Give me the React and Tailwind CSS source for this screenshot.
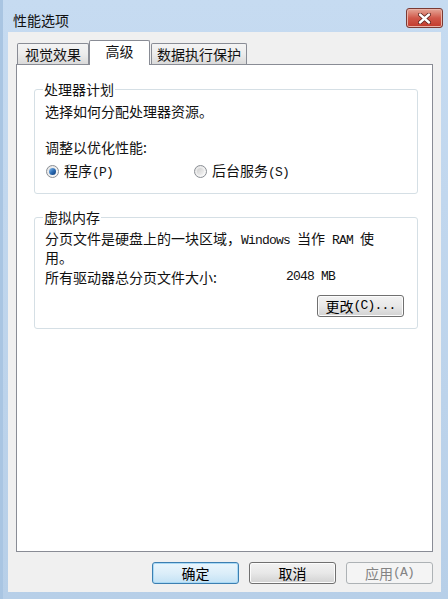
import React from "react";

const cjk = "font-['Noto_Sans_CJK_SC','Noto_Sans',sans-serif]";
const mono = "font-['Liberation_Mono',monospace] text-[13px] tracking-[-0.8px]";

function Radio({ checked }) {
  return (
    <span className="w-[13px] h-[13px] rounded-full border border-[#8a8e94] bg-gradient-to-br from-[#e4e4e4] to-[#fbfbfb] flex items-center justify-center shrink-0">
      {checked ? (
        <span className="w-[7px] h-[7px] rounded-full bg-gradient-to-br from-[#8fc3f0] via-[#2f6fb6] to-[#0d3a78]" />
      ) : (
        <span className="w-[7px] h-[7px] rounded-full bg-gradient-to-br from-[#cfcfcf] to-[#f4f4f4]" />
      )}
    </span>
  );
}

function Tab({ children, selected, className = "" }) {
  if (selected) {
    return (
      <div
        className={
          "h-[25px] -mb-px relative z-10 border border-b-0 border-[#898c95] bg-white rounded-t-[2px] flex items-start justify-center pt-[2px] text-[14px] leading-[16px] " +
          className
        }
      >
        {children}
      </div>
    );
  }
  return (
    <div
      className={
        "h-[21px] border border-b-0 border-[#898c95] bg-gradient-to-b from-[#f4f4f4] via-[#ececec] to-[#dadada] rounded-t-[2px] flex items-center justify-center text-[14px] leading-[16px] " +
        className
      }
    >
      {children}
    </div>
  );
}

function Btn({ children, variant = "normal", className = "" }) {
  const base =
    "h-[22px] w-[87px] rounded-[3px] flex items-center justify-center text-[14px] leading-[16px] ";
  if (variant === "default")
    return (
      <div
        className={
          base +
          "border border-[#3c7fb1] bg-gradient-to-b from-[#eaf6fd] via-[#dceef9] to-[#c3e2f5] shadow-[inset_0_0_0_1px_#a9d9f5] text-black " +
          className
        }
      >
        {children}
      </div>
    );
  if (variant === "disabled")
    return (
      <div
        className={
          base + "border border-[#adb2b5] bg-[#f4f4f4] text-[#838383] " + className
        }
      >
        {children}
      </div>
    );
  return (
    <div
      className={
        base +
        "border border-[#707070] bg-gradient-to-b from-[#f2f2f2] via-[#e8e8e8] to-[#d2d2d2] shadow-[inset_0_0_0_1px_#fcfcfc] text-black " +
        className
      }
    >
      {children}
    </div>
  );
}

export default function App() {
  return (
    <div
      className={
        "w-[448px] h-[599px] flex flex-col bg-gradient-to-b from-[#c6dbf1] to-[#b7cfe8] border-l-[3px] border-l-[#a9c5e2] text-[#111] " +
        cjk
      }
    >
      {/* title bar */}
      <div className="h-[32px] flex items-start pl-[10px] pr-[5px] shrink-0">
        <span className="mt-[12px] text-[14px] leading-[16px] text-[#111]">性能选项</span>
        <div className="ml-auto mt-[8px] w-[37px] h-[20px] rounded-[3px] border border-[#7a3a34] bg-gradient-to-b from-[#e4a698] via-[#d0584a] to-[#c2392c] shadow-[inset_0_0_0_1px_#eab3a8] flex items-center justify-center">
          <svg width="13" height="11" viewBox="0 0 13 11">
            <path
              d="M2 1.5 L11 9.5 M11 1.5 L2 9.5"
              stroke="#5a1f1a"
              strokeWidth="4"
              strokeLinecap="round"
            />
            <path
              d="M2 1.5 L11 9.5 M11 1.5 L2 9.5"
              stroke="#ffffff"
              strokeWidth="2.4"
              strokeLinecap="round"
            />
          </svg>
        </div>
      </div>

      {/* client */}
      <div className="flex-1 ml-[5px] mr-[7px] mb-[7px] bg-[#f0f0f0] flex flex-col px-[8px] pt-[8px] pb-[8px] min-h-0">
        {/* tabs */}
        <div className="h-[24px] flex items-end pl-[1px] shrink-0">
          <Tab className="w-[72px]">视觉效果</Tab>
          <Tab selected className="w-[61px]">高级</Tab>
          <Tab className="w-[96px] ml-[1px]">数据执行保护</Tab>
        </div>

        {/* panel */}
        <div className="flex-1 border border-[#898c95] bg-white pl-[17px] pr-[14px] pt-[16px]">
          <fieldset className="border border-[#d5dfe5] rounded-[3px] pl-[10px] pr-[10px] pt-[6px] pb-[14px] text-[14px] leading-[16px]">
            <legend className="-ml-[2px] px-[1px] leading-[16px]">处理器计划</legend>
            <div>选择如何分配处理器资源。</div>
            <div className="mt-[20px]">调整以优化性能:</div>
            <div className="mt-[8px] h-[16px] flex items-center">
              <div className="w-[149px] flex items-center pl-[1px]">
                <Radio checked />
                <span className="ml-[5px]">
                  程序<span className={mono}>(P)</span>
                </span>
              </div>
              <div className="flex items-center">
                <Radio />
                <span className="ml-[5px]">
                  后台服务<span className={mono}>(S)</span>
                </span>
              </div>
            </div>
          </fieldset>

          <fieldset className="mt-[15px] border border-[#d5dfe5] rounded-[3px] pl-[10px] pr-[13px] pt-[5px] pb-[11px] text-[14px] leading-[16px]">
            <legend className="-ml-[2px] px-[1px] leading-[16px]">虚拟内存</legend>
            <div>
              分页文件是硬盘上的一块区域，<span className={mono}>Windows </span>当作
              <span className={mono}> RAM </span>使
              <br />
              用。
            </div>
            <div className="mt-[4px] flex items-center">
              <span className="w-[241px]">所有驱动器总分页文件大小:</span>
              <span className={mono}>2048 MB</span>
            </div>
            <div className="mt-[10px] flex justify-end">
              <Btn>
                更改<span className={mono}>(C)...</span>
              </Btn>
            </div>
          </fieldset>
        </div>

        {/* bottom buttons */}
        <div className="mt-[10px] h-[22px] flex justify-end gap-[10px] shrink-0">
          <Btn variant="default">确定</Btn>
          <Btn>取消</Btn>
          <Btn variant="disabled">
            应用<span className={mono}>(A)</span>
          </Btn>
        </div>
      </div>
    </div>
  );
}
